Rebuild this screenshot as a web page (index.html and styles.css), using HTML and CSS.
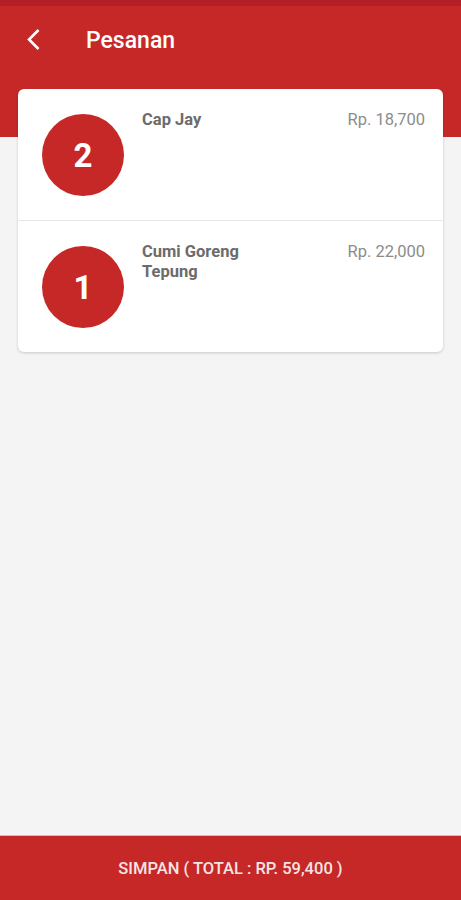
FILE: index.html
```html
<!DOCTYPE html>
<html>
<head>
<meta charset="utf-8">
<link rel="stylesheet" href="styles.css">
</head>
<body>
<div class="app">
  <div class="statusbar"></div>
  <header class="toolbar">
    <svg class="back" width="13" height="21" viewBox="0 0 12 20"><path d="M11.67 1.87L9.9 0.1 0 10l9.9 9.9 1.77-1.77L3.54 10z" fill="#fff"/></svg>
    <h1 class="title">Pesanan</h1>
  </header>
  <main class="content">
    <div class="card">
      <div class="row">
        <div class="qty">2</div>
        <div class="name">Cap Jay</div>
        <div class="price">Rp. 18,700</div>
      </div>
      <div class="row">
        <div class="qty">1</div>
        <div class="name">Cumi Goreng Tepung</div>
        <div class="price">Rp. 22,000</div>
      </div>
    </div>
  </main>
  <footer class="savebar">SIMPAN ( TOTAL : RP. 59,400 )</footer>
</div>
</body>
</html>
```
FILE: styles.css
```css
html, body {
  margin: 0;
  padding: 0;
}
body {
  font-family: Roboto, "Liberation Sans", sans-serif;
}
.app {
  width: 461px;
  height: 900px;
  display: flex;
  flex-direction: column;
  background: linear-gradient(#c62828 0, #c62828 137px, #f4f4f4 137px);
}
.statusbar {
  height: 6px;
  background: #b31f24;
}
.toolbar {
  height: 68px;
  display: flex;
  align-items: center;
  padding-left: 27px;
  box-sizing: border-box;
}
.back {
  display: block;
  margin-top: -1px;
}
.title {
  margin: 0 0 0 46px;
  color: #fff;
  font-size: 23px;
  font-weight: 500;
}
.content {
  flex: 1;
  padding: 15px 18px 0;
}
.card {
  background: #fff;
  border-radius: 6px;
  box-shadow: 0 1px 3px rgba(0,0,0,0.18);
  overflow: hidden;
}
.row {
  height: 131px;
  display: flex;
  align-items: flex-start;
  padding: 0 18px 0 24px;
  box-sizing: border-box;
}
.row + .row {
  border-top: 1px solid #e6e6e6;
  height: 132px;
}
.qty {
  width: 82px;
  height: 82px;
  border-radius: 50%;
  background: #c62828;
  color: #fff;
  font-size: 33px;
  font-weight: 700;
  display: flex;
  align-items: center;
  justify-content: center;
  margin-top: 25px;
  flex: none;
}
.name {
  margin: 21px 0 0 18px;
  width: 120px;
  color: #6b6b6b;
  font-size: 16.5px;
  font-weight: 700;
  line-height: 20px;
}
.price {
  margin: 21px 0 0 auto;
  color: #8c8c8c;
  font-size: 16.5px;
  line-height: 20px;
}
.savebar {
  height: 65px;
  background: #c62828;
  color: #f6e4e4;
  display: flex;
  align-items: center;
  justify-content: center;
  font-size: 16.5px;
  font-weight: 500;
  border-top: 1px solid #e9b0b0;
  box-sizing: border-box;
}
```
